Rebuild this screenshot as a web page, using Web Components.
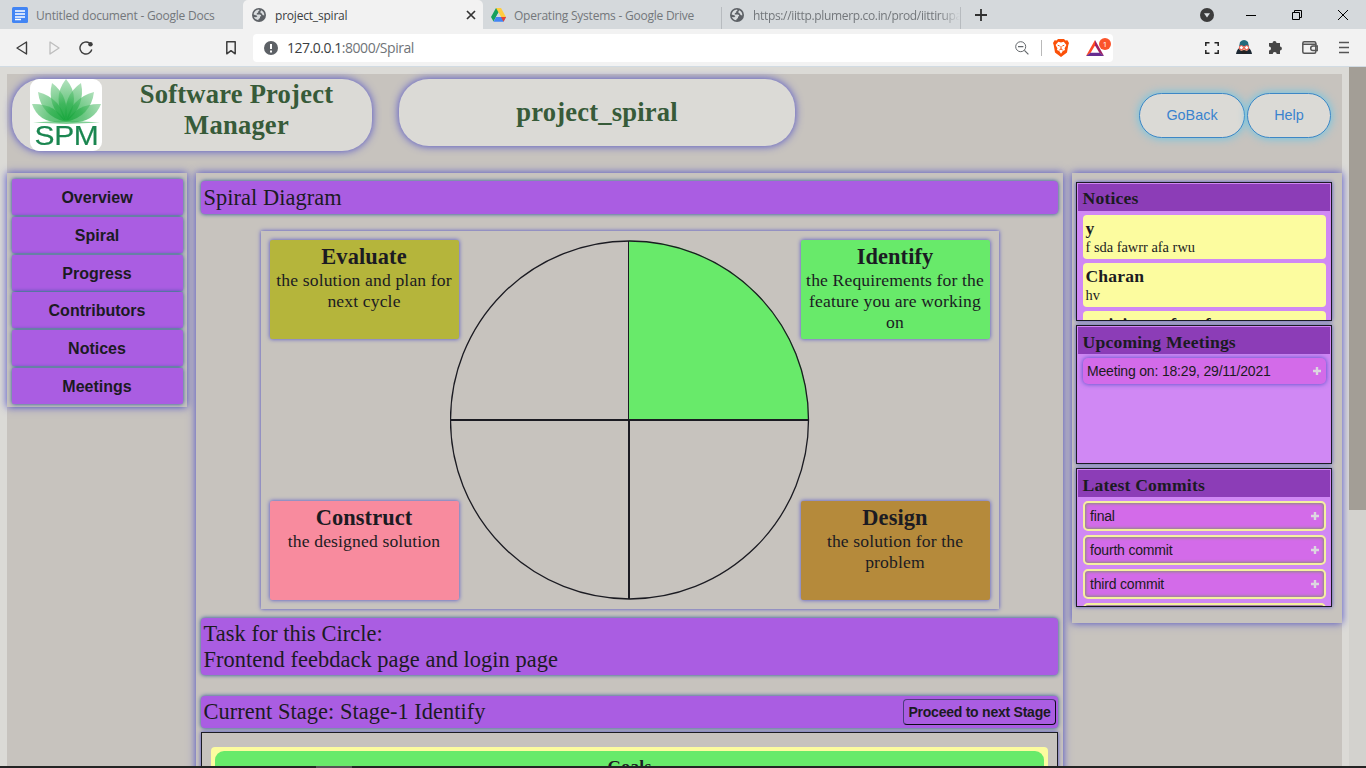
<!DOCTYPE html>
<html lang="en">
<head>
<meta charset="utf-8">
<title>project_spiral</title>
<style>
html,body{margin:0;height:768px;overflow:hidden}
body{font-family:"Liberation Serif",serif;color:#1b1b22;background:#dbdad6}
</style>
</head>
<body>
<spm-app></spm-app>
<script>
const define = (name, html) => customElements.define(name, class extends HTMLElement {
  constructor() {
    super();
    const t = document.createElement('template');
    t.innerHTML = '<style>*{box-sizing:border-box}</style>' + html;
    this.attachShadow({mode: 'open'}).appendChild(t.content.cloneNode(true));
  }
});

const globe = '<svg width="14" height="14" viewBox="0 0 14 14"><circle cx="7" cy="7" r="7" fill="#5d6166"/><path d="M1.600 6.600C1.800 4 4 1.800 7 1.600L7.600 2.200 6.200 3.400V4.600L4.800 5.200V6.600H7.800Q9.400 6.800 9.200 8.200L8 8.600V10L6.400 11.200V12.300Q3 12 1.900 9L4.200 9.200 5.400 8.200 4.600 7.600ZM9.400 2.200Q12.400 3.800 12.300 7.400L10.600 7 9.800 5.400 8.600 5 8.400 3.600Z" fill="#d9dcde"/></svg>';

define('browser-tab', `
<style>
:host{display:flex;align-items:center;height:29px;width:239px;padding:1px 0 0 12px;font:12px "Open Sans",sans-serif;color:#73777b;flex:none}
:host([active]){background:#f2f2f2;color:#3b3e42;border-radius:5px 5px 0 0;width:240px;padding-left:8px}
:host([divided])::after{content:"";width:1px;height:22px;margin-top:6px;background:#b7bbbf}
.i{display:flex;width:16px;justify-content:center;margin-right:8px}
.t{flex:1;white-space:nowrap;overflow:hidden;letter-spacing:var(--ls,0)}
:host([fade]) .t{-webkit-mask-image:linear-gradient(90deg,#000 90%,transparent)}
</style><span class="i"><slot name="icon"></slot></span><span class="t"><slot></slot></span>
<slot name="close"></slot>`);

define('browser-tabs', `
<style>
:host{display:flex;height:29px;background:#d5d9dc;align-items:center}
.plus{margin:1px auto 0 14px}
.w{display:flex;align-items:center;gap:0;padding-right:18px}
svg{display:block}
</style>
<browser-tab style="width:243px;--ls:-.21px"><svg slot="icon" width="16" height="16" viewBox="0 0 16 16"><rect width="16" height="16" rx="1.5" fill="#4285f4"/><path d="M3 4h10M3 7h10M3 10h10M3 12.5h6" stroke="#fff" stroke-width="1.5"/></svg>Untitled document - Google Docs</browser-tab>
<browser-tab active style="--ls:-.2px"><span slot="icon">${globe}</span>project_spiral<svg slot="close" style="margin-right:7px" width="10" height="10" viewBox="0 0 10 10"><path d="M1 1 9 9M9 1 1 9" stroke="#333" stroke-width="1.7"/></svg></browser-tab>
<browser-tab divided style="padding-left:7px;--ls:-.23px"><svg slot="icon" width="15" height="14" viewBox="0 0 15 14"><path d="M5 0h5L5 9 2.5 13.5 0 9Z" fill="#16a05d"/><path d="M5 0h5l5 9h-5Z" fill="#ffcd40"/><path d="M5 9h10l-2.5 4.800h-10Z" fill="#4285f4"/><path d="M10 9h5l-2.500 4.800Z" fill="#ea4335"/><path d="M7.500 4.500 10 9H5Z" fill="#d5d9dc"/></svg>Operating Systems - Google Drive</browser-tab>
<browser-tab divided fade style="padding-left:7px;--ls:-.34px"><span slot="icon">${globe}</span>https://iittp.plumerp.co.in/prod/iittirupati</browser-tab>
<svg class="plus" width="12" height="12" viewBox="0 0 12 12"><path d="M6 0v12M0 6h12" stroke="#303030" stroke-width="1.8"/></svg>
<div class="w">
<svg width="14" height="14" viewBox="0 0 14 14"><circle cx="7" cy="7" r="7" fill="#3c3c3c"/><path d="M4 5.200h6L7 9.500Z" fill="#dce0e3"/></svg>
<svg style="margin-left:32px" width="10" height="10"><path d="M0 5.500h10" stroke="#000"/></svg>
<svg style="margin-left:36px" width="10" height="10" viewBox="0 0 10 10" fill="none" stroke="#000"><path d="M.5 2.500h7v7h-7ZM2.500 2.500v-2h7v7h-2"/></svg>
<svg style="margin-left:36px" width="10" height="10" viewBox="0 0 10 10"><path d="M0 0 10 10M10 0 0 10" stroke="#000"/></svg>
</div>`);

define('browser-toolbar', `
<style>
:host{display:flex;height:38px;background:#f2f2f2;border-bottom:1px solid #d1dbe3;align-items:center;font:14px "Open Sans",sans-serif;color:#707478}
svg{display:block;flex:none}
.addr{display:flex;align-items:center;height:28px;width:860px;background:#fff;border-radius:4px;margin-left:17px;padding-left:11px}
.u{margin-left:9px;letter-spacing:-.47px;flex:1;font-size:14px}b{font-weight:400;color:#3b3e42}
.n{position:relative;display:block;margin:0 2px 0 17px;width:25px;height:19px}
.n i{position:absolute;left:13px;top:0;width:12px;height:12px;border-radius:6px;background:#fb542b;color:#fff;font:8px/12px "Open Sans",sans-serif;text-align:center}
.n svg{margin-top:2px}
</style>
<svg style="margin-left:16px" width="12" height="14" viewBox="0 0 12 14"><path d="M10.500 1v12L1 7Z" fill="none" stroke="#3d3d3d" stroke-width="1.400" stroke-linejoin="round"/></svg>
<svg style="margin-left:21px" width="11" height="14" viewBox="0 0 11 14"><path d="M1 1v12L10 7Z" fill="none" stroke="#bdbdbd" stroke-width="1.300" stroke-linejoin="round"/></svg>
<svg style="margin-left:19px" width="14" height="14" viewBox="0 0 14 14"><path d="M10.600 2.200A6 6 0 1 0 12.800 8.500" fill="none" stroke="#3d3d3d" stroke-width="1.400"/><circle cx="11.500" cy="3.300" r="2.200" fill="#3d3d3d"/></svg>
<svg style="margin-left:133px" width="10" height="14" viewBox="0 0 10 14"><path d="M.8.8h8.400v12L5 9.700.8 12.800Z" fill="none" stroke="#3d3d3d" stroke-width="1.500" stroke-linejoin="round"/></svg>
<div class="addr">
<svg width="14" height="14" viewBox="0 0 14 14"><circle cx="7" cy="7" r="7" fill="#5d6166"/><path d="M7 3v5M7 9.400v2" stroke="#fff" stroke-width="2"/></svg>
<span class="u"><b>127.0.0.1</b>:8000/Spiral</span>
<svg width="14" height="14" viewBox="0 0 14 14" fill="none" stroke="#63676b"><circle cx="5.700" cy="5.700" r="5"/><path d="M3 5.700h5.400M9.400 9.400l4 4" stroke-width="1.200"/></svg>
<svg style="margin-left:12px" width="1" height="16"><rect width="1" height="16" fill="#b9b9b9"/></svg>
<svg style="margin-left:11px" width="16" height="18" viewBox="0 0 16 18"><path d="M5 0h6l1.400 1.500 2-.2L16 4l-.7 2L14 13.500 8 18 2 13.500.7 6 0 4l1.600-2.700 2 .2Z" fill="#fb5008"/><path d="M5.300 2.800 8 3.400l2.700-.6L13.400 6l-1.800 3.300.4 1.700-2.200 1L8 14.800 6.200 12 4 11l.4-1.700L2.600 6Z" fill="#fff"/><path d="m4.700 6.200 2 .8M11.300 6.200l-2 .8M8 7v3M6.300 11 8 10l1.700 1" stroke="#fb5008" fill="none"/></svg>
<span class="n"><svg width="18" height="16" viewBox="0 0 18 16"><path d="M9 0 0 16 4.500 13 9 5.500Z" fill="#ff4724"/><path d="M9 0 18 16 13.500 13 9 5.500Z" fill="#9e1f63"/><path d="M0 16h18l-4.500-3.200h-9Z" fill="#662d91"/></svg><i>1</i></span>
</div>
<svg style="margin-left:92px" width="14" height="12" viewBox="0 0 14 12"><path d="M.8 4V.8H4.500M9.500.8h3.700V4M13.200 8v3.200H9.500M4.500 11.200H.8V8" fill="none" stroke="#222" stroke-width="1.500"/></svg>
<svg style="margin-left:17px" width="16" height="15" viewBox="0 0 16 15"><path d="M3 7 4 2Q8-2 12 2l1 5Z" fill="#236a7c"/><path d="M0 14Q1 9 3.500 8h9Q15 9 16 14Z" fill="#1b2732"/><path d="M3 6h10v3L11 11H5L3 9Z" fill="#f0a58b"/><circle cx="5.400" cy="7.600" r="2" fill="#fff" stroke="#e34b3c"/><circle cx="10.600" cy="7.600" r="2" fill="#fff" stroke="#e34b3c"/><path d="m5 11 3-1 3 1-1 3H6Z" fill="#222"/></svg>
<svg style="margin-left:16px" width="15" height="15" viewBox="0 0 15 15"><path d="M1 3h3.500a2 2 0 1 1 4 0H12v3.600a1.900 1.900 0 1 1 0 3.800V14H8.700a2 2 0 0 0-4 0H1v-3.500a2 2 0 0 0 0-4Z" fill="#464646"/></svg>
<svg style="margin-left:19px" width="16" height="13" viewBox="0 0 16 13" fill="none" stroke="#555" stroke-width="1.500"><rect x=".8" y=".8" width="13" height="11.400" rx="1.500"/><path d="M1 3.300h13.500M15.200 5H11a2.200 2.200 0 0 0 0 4.600h4.200Z"/></svg>
<svg style="margin-left:21px" width="10" height="13" viewBox="0 0 10 13"><path d="M0 1.500h10M0 6.500h10M0 11.500h10" stroke="#555" stroke-width="1.600"/></svg>`);

define('spm-logo', `
<style>:host{display:block;width:72px;height:72px;background:#fff;border-radius:9px;overflow:hidden}
svg{display:block}.t{font:27px/25px "Liberation Sans",sans-serif;color:#1a8650;letter-spacing:-.3px;text-align:center;margin:-1px 0 0 1px;transform:scaleX(1.110);-webkit-text-stroke:.2px #1a8650}</style>
<svg width="72" height="46" viewBox="0 0 72 46"><defs><radialGradient id="g" cx="36" cy="42" r="44" gradientUnits="userSpaceOnUse"><stop offset="0" stop-color="#10a336"/><stop offset=".4" stop-color="#2fb04f"/><stop offset="1" stop-color="#a2dbae"/></radialGradient></defs>
<g fill="url(#g)" fill-opacity=".72"><path d="M36 43Q21 19 36 0 52 19 36 43Z"/><path d="M36 43Q16 27 22 4 40 17 36 43Z"/><path d="M36 43Q56 27 51 4 32 17 36 43Z"/><path d="M36 43Q11 37 8 13 31 19 36 43Z"/><path d="M36 43Q61 37 64 13 41 19 36 43Z"/><path d="M36 43Q9 46 2 25 25 24 36 43Z"/><path d="M36 43Q63 46 71 25 47 24 36 43Z"/></g><path d="M3 43.500 36 41.500 70 43.500 36 45Z" fill="#4cba68" opacity=".7"/></svg><div class="t">SPM</div>`);

define('pill-button', `
<style>:host{display:flex;align-items:center;justify-content:center;height:45px;border:1px solid #3d87c6;border-radius:23px;padding-bottom:2px;background:#dbdad6;box-shadow:0 0 10px #62c6ea;color:#3a83ce;font:14.400px "Liberation Sans",sans-serif}</style><slot></slot>`);

define('spm-header', `
<style>
:host{display:flex;height:99px;padding:5px 11px 0 5px;align-items:flex-start;font-weight:700;font-size:26.600px;line-height:31px;color:#375b39;text-align:center}
.a,.b{background:#dbdad6;border-radius:30px;box-shadow:0 0 8px #4b4bc8}
.a{width:360px;height:72px;display:flex;padding-left:18px}
.a span{flex:1;padding:0 33px 0 32px;letter-spacing:.2px}
.b{width:396px;height:67px;margin-left:27px;line-height:67px;letter-spacing:.17px}
.r{display:flex;gap:2px;margin:14px 0 0 auto}
</style>
<div class="a"><spm-logo></spm-logo><span>Software Project Manager</span></div>
<div class="b">project_spiral</div>
<div class="r"><pill-button style="width:106px">GoBack</pill-button><pill-button style="width:84px">Help</pill-button></div>`);

define('side-nav', `
<style>
:host{display:flex;flex-direction:column;gap:1.800px;width:180px;height:234px;padding:6px 4px 0 5px;background:#c7c3be;box-shadow:0 0 8px #4b4bc8}
div{height:36px;background:#aa5de2;border-radius:2px;box-shadow:0 0 4px #1c4c92;font:700 16px/37px "Liberation Sans",sans-serif;text-align:center;padding-right:1px}
</style>
<div>Overview</div><div>Spiral</div><div>Progress</div><div>Contributors</div><div>Notices</div><div>Meetings</div>`);

define('title-bar', `
<style>:host{display:flex;align-items:center;justify-content:space-between;background:#aa5de2;border-radius:4px;box-shadow:0 0 4px #1c4c92;padding:0 2px 0 2.600px;font-size:22.400px;line-height:26px;letter-spacing:.05px}</style><slot></slot>`);

define('phase-card', `
<style>:host{display:block;width:189px;height:99px;padding:3px 3px 0 2px;text-align:center;box-shadow:0 0 4px #4b4bc8;border-radius:2px;font-size:17.600px;line-height:21px;letter-spacing:.14px;background:var(--c)}
b{display:block;font-size:22.400px;line-height:27px;letter-spacing:.1px}</style><b><slot name="name"></slot></b><slot></slot>`);

define('spiral-diagram', `
<style>
:host{display:grid;grid-template-columns:189px 342px 189px;grid-template-rows:99px 1fr 99px;width:738px;height:378px;padding:9px 8px 9px 9px;box-shadow:0 0 4px #4b4bc8}
svg{grid-column:2;grid-row:1/4;margin-left:-9px;display:block}
</style>
<phase-card style="--c:#b5b53b"><span slot="name">Evaluate</span>the solution and plan for next cycle</phase-card>
<svg width="360" height="360" viewBox="0 0 360 360"><path d="M179 179V.5A179.500 179.500 0 0 1 359 180Z" fill="#68ea6a"/><circle cx="179.500" cy="180" r="179" fill="none" stroke="#1b1b22" stroke-width="1.300"/><path d="M178 1h1v179h-1ZM178 180h2v179h-2ZM0 179h359v2H0Z" fill="#1b1b22"/></svg>
<phase-card style="--c:#68ea6a;grid-column:3"><span slot="name">Identify</span>the Requirements for the feature you are working on</phase-card>
<phase-card style="--c:#f88b9e;grid-row:3"><span slot="name">Construct</span>the designed solution</phase-card>
<phase-card style="--c:#b58a3b;grid-column:3;grid-row:3"><span slot="name">Design</span>the solution for the problem</phase-card>`);

define('spiral-main', `
<style>
:host{display:flex;flex-direction:column;width:867px;height:610px;padding:8px 5px 0;margin-left:9px;box-shadow:0 0 8px #4b4bc8;background:#c7c3be}
button{font:700 14px "Liberation Sans",sans-serif;letter-spacing:-.24px;color:#1b1b22;height:26px;width:153px;padding:0;background:none;border:1px solid;border-color:#4b3c7c #0c0c18 #0c0c18 #4b3c7c;border-radius:4px;white-space:nowrap}
.g{border:1px solid #1b1b22;height:90px;margin-top:4px;padding:14px 9px 0;box-shadow:0 0 4px #4b4bc8}
.y{background:#fcfc9f;height:60px;border-radius:4px;padding:4px 4px 0}
.n{background:#68ea6a;height:50px;border-radius:9px;text-align:center;font-weight:700;font-size:17.600px;line-height:30px;letter-spacing:.2px}
title-bar{flex:none}
</style>
<title-bar style="height:33px">Spiral Diagram</title-bar>
<spiral-diagram style="margin:17px 0 9px 60px"></spiral-diagram>
<title-bar style="height:57px"><div>Task for this Circle:<br>Frontend feebdack page and login page</div></title-bar>
<title-bar style="height:32px;margin-top:21px"><span>Current Stage: Stage-1 Identify</span><button>Proceed to next Stage</button></title-bar>
<div class="g"><div class="y"><div class="n">Goals</div></div></div>`);

define('side-panel', `
<style>
:host{display:block;height:139px;border:1px solid #1b1b22;padding:1px;background:#d088f4;overflow:hidden;box-shadow:0 0 4px #4b4bc8}
h3{margin:0 0 4px;height:27px;background:#8c3db7;font-size:17.600px;line-height:var(--lh,29px);padding-left:4.500px;letter-spacing:.2px}
.l{display:flex;flex-direction:column;gap:4px;padding:0 4px 0 5px}
</style><h3><slot name="heading"></slot></h3><div class="l"><slot></slot></div>`);

define('notice-card', `
<style>:host{display:block;height:44px;flex:none;background:#fcfc9f;border-radius:4px;padding:4px 3px 0 2.500px;font-size:14.400px;line-height:19px}
b{display:block;font-size:17.600px;line-height:19px;letter-spacing:.15px}</style><b><slot name="name"></slot></b><slot></slot>`);

define('fold-button', `
<style>:host{display:flex;justify-content:space-between;align-items:center;height:25px;flex:none;background:#d36be9;border-radius:5px;box-shadow:0 0 5px #4b4bc8;padding:0 5px 0 4px;font:14px "Liberation Sans",sans-serif;letter-spacing:-.18px}
:host([commit]){height:30px;border:2px solid #f5f19f;background:#d36be9;box-shadow:inset 0 0 3px 1px #8f8a80;padding:0 5px}
</style><slot></slot><svg width="8" height="8" viewBox="0 0 8 8"><path d="M4 0v8M0 4h8" stroke="#dcd6e0" stroke-width="2.400"/></svg>`);

define('side-panels', `
<style>:host{display:flex;flex-direction:column;gap:4px;width:270px;height:450px;margin-left:9px;padding:9px 10px 0 4px;background:#c7c3be;box-shadow:0 0 8px #4b4bc8}
side-panel{flex:none}</style>
<side-panel><span slot="heading">Notices</span>
<notice-card><span slot="name">y</span>f sda fawrr afa rwu</notice-card>
<notice-card><span slot="name">Charan</span>hv</notice-card>
<notice-card><span slot="name">activity on f sraf</span></notice-card></side-panel>
<side-panel style="--lh:31px"><span slot="heading">Upcoming Meetings</span><fold-button style="height:26px"><span>Meeting on: 18:29, 29/11/2021</span></fold-button></side-panel>
<side-panel style="--lh:31px"><span slot="heading">Latest Commits</span><fold-button commit><span>final</span></fold-button><fold-button commit><span>fourth commit</span></fold-button><fold-button commit><span>third commit</span></fold-button><fold-button commit></fold-button></side-panel>`);

define('spm-app', `
<style>
:host{display:flex;flex-direction:column;height:768px;overflow:hidden}
.view{display:flex;height:699px;background:#dbdad6;overflow:hidden}
.page{width:1335px;height:720px;margin:7px 7px 0;background:#c7c3be;flex:none}
.cols{display:flex;align-items:flex-start}
.bar{width:17px;background:#d3d2ce}.bar i{display:block;height:443px;background:#a39e96}
.os{height:2px;background:#242424;padding-left:316px}.os i{display:block;width:36px;height:2px;background:#555}
</style>
<browser-tabs></browser-tabs><browser-toolbar></browser-toolbar>
<div class="view"><div class="page"><spm-header></spm-header><div class="cols"><side-nav></side-nav><spiral-main></spiral-main><side-panels></side-panels></div></div><div class="bar"><i></i></div></div>
<div class="os"><i></i></div>`);
</script>
</body>
</html>
